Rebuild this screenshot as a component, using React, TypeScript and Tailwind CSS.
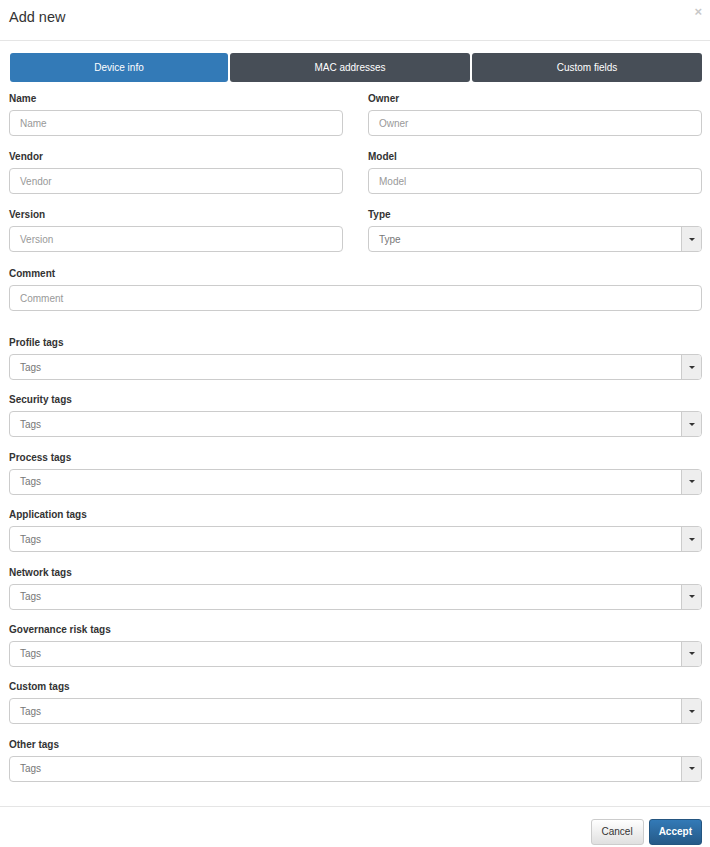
const TAG_FIELDS = [
  "Profile tags",
  "Security tags",
  "Process tags",
  "Application tags",
  "Network tags",
  "Governance risk tags",
  "Custom tags",
  "Other tags",
];

const TABS = [
  { label: "Device info", active: true },
  { label: "MAC addresses", active: false },
  { label: "Custom fields", active: false },
];

function Label({ children }: { children: string }) {
  return <div className="h-[14px] text-[10px] font-bold leading-[17px] text-[#333]">{children}</div>;
}

function TextField({ label, placeholder }: { label: string; placeholder: string }) {
  return (
    <div className="flex flex-col gap-[6px]">
      <Label>{label}</Label>
      <div className="flex h-[26px] items-center rounded-[4px] border border-[#ccc] bg-white pl-[10px] text-[10px] text-[#999]">
        {placeholder}
      </div>
    </div>
  );
}

function SelectField({ label, placeholder }: { label: string; placeholder: string }) {
  return (
    <div className="flex flex-col gap-[6px]">
      <Label>{label}</Label>
      <div className="flex h-[26px] overflow-hidden rounded-[4px] border border-[#ccc] bg-white text-[10px] text-[#777]">
        <div className="flex flex-1 items-center pl-[10px]">{placeholder}</div>
        <div className="flex w-[20px] items-center justify-center border-l border-[#ccc] bg-[#eee]">
          <span className="block h-0 w-0 border-x-[3px] border-t-[3px] border-x-transparent border-t-[#333]" />
        </div>
      </div>
    </div>
  );
}

export default function App() {
  return (
    <div className="min-h-[847px] w-[710px] bg-white font-['Liberation_Sans',Arial,sans-serif] text-[#333]">
      <div className="flex h-[41px] items-center justify-between border-b border-[#e5e5e5] pl-[9px] pr-[8px]">
        <h4 className="pb-[5px] text-[14.5px] font-normal">Add new</h4>
        <span className="-mt-[16px] text-[13px] font-bold text-[#c8c8c8]">×</span>
      </div>

      <div className="pl-[9px] pr-[8px] pt-[12px]">
        <div className="ml-px grid grid-cols-[218fr_240fr_230fr] gap-[2px]">
          {TABS.map((tab) => (
            <div
              key={tab.label}
              className={
                "flex h-[29px] items-center justify-center rounded-[3px] text-[10px] text-white " +
                (tab.active ? "bg-[#337ab7]" : "bg-[#474e57]")
              }
            >
              {tab.label}
            </div>
          ))}
        </div>

        <div className="mt-[8px] grid grid-cols-2 gap-x-[25px] gap-y-[12px]">
          <TextField label="Name" placeholder="Name" />
          <TextField label="Owner" placeholder="Owner" />
          <TextField label="Vendor" placeholder="Vendor" />
          <TextField label="Model" placeholder="Model" />
          <TextField label="Version" placeholder="Version" />
          <SelectField label="Type" placeholder="Type" />
          <div className="col-span-2 pt-px">
            <TextField label="Comment" placeholder="Comment" />
          </div>
        </div>

        <div className="mt-[23px] flex flex-col gap-[11.4px]">
          {TAG_FIELDS.map((name) => (
            <SelectField key={name} label={name} placeholder="Tags" />
          ))}
        </div>
      </div>

      <div className="mt-[24px] flex justify-end gap-[5px] border-t border-[#e5e5e5] pb-[3px] pl-[9px] pr-[8px] pt-[12px]">
        <button
          type="button"
          className="h-[26px] rounded-[3px] border border-[#ccc] bg-gradient-to-b from-white to-[#e0e0e0] px-[10px] text-[10px] text-[#333]"
        >
          Cancel
        </button>
        <button
          type="button"
          className="h-[26px] rounded-[3px] border border-[#245580] bg-gradient-to-b from-[#337ab7] to-[#265a88] px-[9px] text-[10px] font-bold text-white"
        >
          Accept
        </button>
      </div>
    </div>
  );
}
